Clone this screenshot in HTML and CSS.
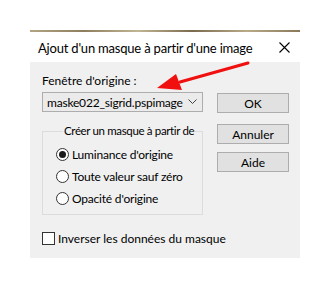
FILE: index.html
```html
<!DOCTYPE html>
<html lang="fr">

<head>
    <meta charset="UTF-8">
    <title>Ajout d'un masque</title>
    <link rel="stylesheet" href="styles.css">
</head>

<body>
    <div class="dialog">
        <div class="title-bar">
            <span class="title">Ajout d'un masque à partir d'une image</span>
            <svg class="close" width="11" height="11" viewBox="0 0 11 11">
                <path d="M0.5 0.5 L10.5 10.5 M10.5 0.5 L0.5 10.5" stroke="#000" stroke-width="1.1" fill="none"/>
            </svg>
        </div>

        <div class="dialog-body">
            <div class="left-col">
                <div class="field-label">Fenêtre d'origine :</div>
                <div class="combo">
                    <span>maske022_sigrid.pspimage</span>
                    <svg class="chevron" width="9" height="6" viewBox="0 0 9 6">
                        <path d="M0.5 0.5 L4.5 4.5 L8.5 0.5" stroke="#444" stroke-width="1" fill="none"/>
                    </svg>
                </div>

                <fieldset class="group">
                    <legend>Créer un masque à partir de</legend>
                    <div class="option">
                        <span class="radio checked"></span>
                        <span>Luminance d'origine</span>
                    </div>
                    <div class="option">
                        <span class="radio"></span>
                        <span>Toute valeur sauf zéro</span>
                    </div>
                    <div class="option">
                        <span class="radio"></span>
                        <span>Opacité d'origine</span>
                    </div>
                </fieldset>

                <div class="check-row">
                    <span class="checkbox"></span>
                    <span>Inverser les données du masque</span>
                </div>
            </div>

            <div class="right-col">
                <button class="btn btn-ok">OK</button>
                <button class="btn btn-cancel">Annuler</button>
                <button class="btn btn-help">Aide</button>
            </div>
        </div>

        <!-- red arrow drawn over the dialog -->
        <svg class="red-arrow" width="100" height="40" viewBox="0 0 100 40">
            <path d="M96 2 L28 21" stroke="#f01010" stroke-width="3" stroke-linecap="round" fill="none"/>
            <polygon points="5,27 24,13 30,29" fill="#f01010"/>
        </svg>
    </div>
</body>

</html>
```

FILE: styles.css
```css
/* Global settings */
*, *::before, *::after {
    box-sizing: border-box;
}

html,
body {
    margin: 0;
    padding: 0;
    background: #fff;
    font-family: Lato, "Noto Sans", sans-serif;
    color: #000;
}

.dialog {
    position: relative;
    width: 270px;
    margin: 30px 0 0 30px;
    border-top: 2px solid #a8977a;
    border-image: linear-gradient(90deg, #b3a586, #8f7d5e 20%, #c2b593 40%, #7c6a4f 60%, #b9aa88 80%, #8a7858) 1;
    white-space: nowrap;
}

.title-bar {
    height: 30px;
    background: #fff;
    display: flex;
    align-items: center;
    justify-content: space-between;
    padding: 0 10px 0 8px;
}

.title {
    font-size: 13px;
    letter-spacing: -0.2px;
    margin-top: 1px;
}

.close {
    display: block;
    flex-shrink: 0;
}

.dialog-body {
    background: #f0f0f0;
    display: flex;
    padding: 11px 11px 12px 12px;
    font-size: 12px;
}

.left-col {
    width: 161px;
    flex-shrink: 0;
}

.field-label {
    line-height: 16px;
}

.combo {
    margin-top: 3px;
    height: 20px;
    border: 1px solid #adadad;
    background: #ebebeb;
    display: flex;
    align-items: center;
    justify-content: space-between;
    padding: 0 5px 0 4px;
    letter-spacing: -0.2px;
}

.chevron {
    display: block;
    flex-shrink: 0;
}

.group {
    margin: 11px 0 0;
    padding: 4px 0 5px 13px;
    border: 1px solid #dcdcdc;
    min-width: 0;
}

.group legend {
    padding: 0 1px;
    margin-left: 7px;
    line-height: 16px;
    font-size: 11.5px;
    letter-spacing: -0.35px;
}

.option {
    display: flex;
    align-items: center;
    height: 22px;
    letter-spacing: -0.2px;
}

.radio {
    flex-shrink: 0;
    width: 13px;
    height: 13px;
    border: 1px solid #333;
    border-radius: 50%;
    background: #fff;
    margin-right: 3px;
    display: flex;
    align-items: center;
    justify-content: center;
}

.radio.checked::after {
    content: "";
    width: 7px;
    height: 7px;
    border-radius: 50%;
    background: #1a1a1a;
}

.check-row {
    display: flex;
    align-items: center;
    margin-top: 16px;
    height: 15px;
}

.checkbox {
    flex-shrink: 0;
    width: 13px;
    height: 13px;
    border: 1px solid #333;
    background: #fff;
    margin-right: 3px;
}

.right-col {
    margin-left: 14px;
    display: flex;
    flex-direction: column;
}

.btn {
    width: 72px;
    height: 20px;
    border: 1px solid #adadad;
    background: #e1e1e1;
    font-family: inherit;
    font-size: 12px;
    padding: 0;
    color: #000;
}

.btn-ok {
    margin-top: 20px;
}

.btn-cancel {
    margin-top: 11px;
}

.btn-help {
    margin-top: 8px;
}

.red-arrow {
    position: absolute;
    left: 122px;
    top: 29px;
}
```
